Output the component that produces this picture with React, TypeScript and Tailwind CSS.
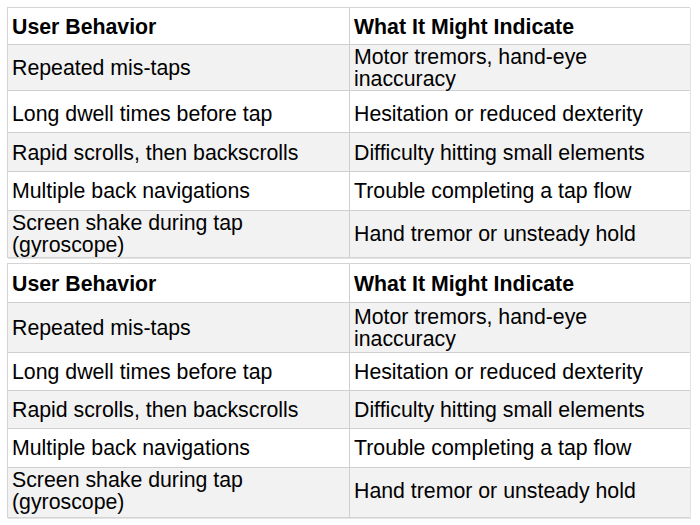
import React from "react";

const rows: { a: string[]; b: string[] }[] = [
  { a: ["Repeated mis-taps"], b: ["Motor tremors, hand-eye", "inaccuracy"] },
  { a: ["Long dwell times before tap"], b: ["Hesitation or reduced dexterity"] },
  { a: ["Rapid scrolls, then backscrolls"], b: ["Difficulty hitting small elements"] },
  { a: ["Multiple back navigations"], b: ["Trouble completing a tap flow"] },
  { a: ["Screen shake during tap", "(gyroscope)"], b: ["Hand tremor or unsteady hold"] },
];

function Cell({ lines, bold, right, bg, h }: { lines: string[]; bold?: boolean; right?: boolean; bg: string; h: string }) {
  return (
    <div
      className={`${h} ${bg} flex flex-col justify-center px-[4px] ${right ? "" : "border-r border-[#cfcfcf]"} ${bold ? "font-bold" : ""} text-[21.3px] leading-[22px] text-black`}
    >
      {lines.map((l, i) => (
        <div key={i} className="whitespace-nowrap">{l}</div>
      ))}
    </div>
  );
}

function Table({ heights }: { heights: string[] }) {
  return (
    <div className="w-[683px] border border-[#d4d4d4] shadow-[1px_1px_0_#e3e3e3]">
      <div className="grid grid-cols-[342px_340px]">
        <Cell lines={["User Behavior"]} bold bg="bg-white" h={heights[0]} />
        <Cell lines={["What It Might Indicate"]} bold right bg="bg-white" h={heights[0]} />
      </div>
      {rows.map((r, i) => {
        const bg = i % 2 === 0 ? "bg-[#f2f2f2]" : "bg-white";
        return (
          <div key={i} className="grid grid-cols-[342px_340px] border-t border-[#cfcfcf]">
            <Cell lines={r.a} bg={bg} h={heights[i + 1]} />
            <Cell lines={r.b} right bg={bg} h={heights[i + 1]} />
          </div>
        );
      })}
    </div>
  );
}

export default function App() {
  return (
    <div
      className="w-[700px] h-[525px] bg-white pl-[7px] pt-[7px] flex flex-col gap-[5px]"
      style={{ fontFamily: '"Liberation Sans", Arial, Helvetica, sans-serif' }}
    >
      <Table
        heights={[
          "h-[36px] pt-[2px]",
          "h-[45px] pt-[1px]",
          "h-[41px] pt-[5px]",
          "h-[38px] pt-[2px]",
          "h-[38px]",
          "h-[46px]",
        ]}
      />
      <Table
        heights={[
          "h-[38px] pt-[2px]",
          "h-[49px]",
          "h-[37px]",
          "h-[37px]",
          "h-[38px]",
          "h-[49px] pb-[3px]",
        ]}
      />
    </div>
  );
}
